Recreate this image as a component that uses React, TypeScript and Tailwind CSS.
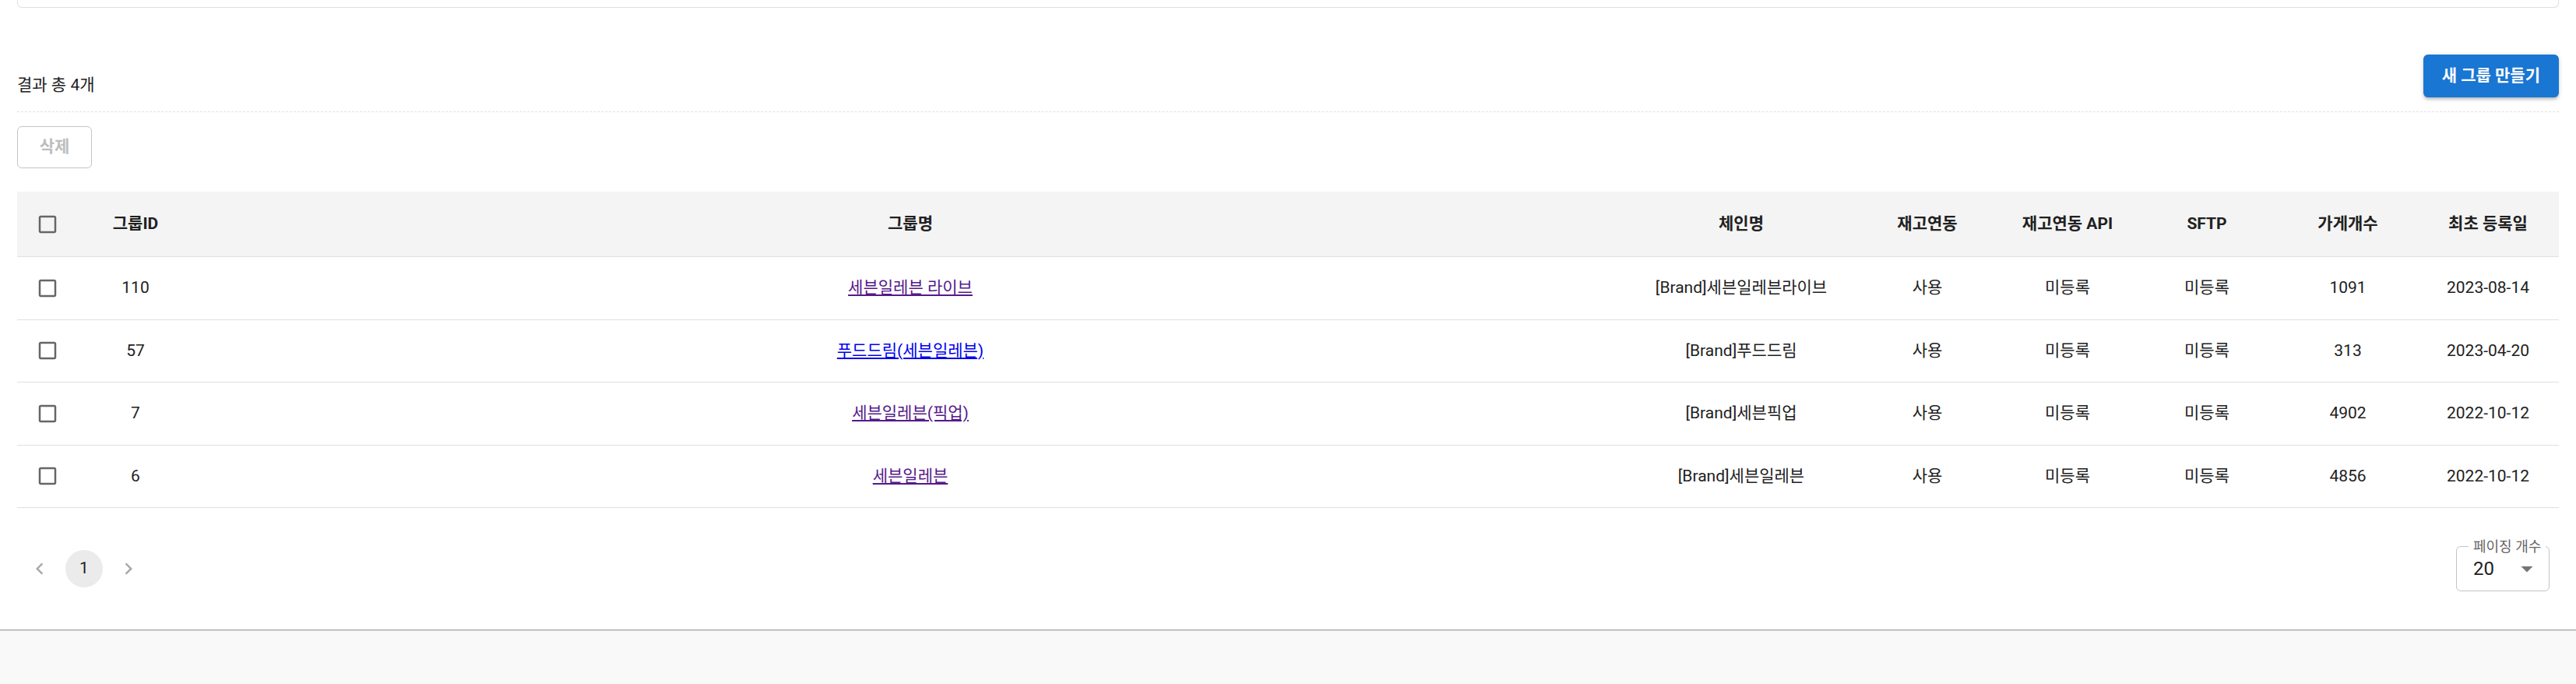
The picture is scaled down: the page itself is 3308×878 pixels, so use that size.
import React from 'react'

interface GroupRow {
  id: number
  name: string
  chain: string
  stock: string
  stockApi: string
  sftp: string
  stores: number
  createdAt: string
  visited: boolean
}

const rows: GroupRow[] = [
  { id: 110, name: '세븐일레븐 라이브', chain: '[Brand]세븐일레븐라이브', stock: '사용', stockApi: '미등록', sftp: '미등록', stores: 1091, createdAt: '2023-08-14', visited: true },
  { id: 57, name: '푸드드림(세븐일레븐)', chain: '[Brand]푸드드림', stock: '사용', stockApi: '미등록', sftp: '미등록', stores: 313, createdAt: '2023-04-20', visited: false },
  { id: 7, name: '세븐일레븐(픽업)', chain: '[Brand]세븐픽업', stock: '사용', stockApi: '미등록', sftp: '미등록', stores: 4902, createdAt: '2022-10-12', visited: true },
  { id: 6, name: '세븐일레븐', chain: '[Brand]세븐일레븐', stock: '사용', stockApi: '미등록', sftp: '미등록', stores: 4856, createdAt: '2022-10-12', visited: true },
]

const cols = 'grid grid-cols-[78px_148px_1fr_292px_186px_174px_184px_178px_182px] items-center text-center'

function Checkbox() {
  return (
    <svg viewBox="0 0 24 24" className="w-[30px] h-[30px] fill-[#666666]">
      <path d="M19 5v14H5V5h14m0-2H5c-1.11 0-2 .9-2 2v14c0 1.1.89 2 2 2h14c1.1 0 2-.9 2-2V5c0-1.1-.9-2-2-2z" />
    </svg>
  )
}

function Chevron({ dir }: { dir: 'left' | 'right' }) {
  return (
    <div className="w-[48px] h-[48px] flex items-center justify-center">
      <svg viewBox="0 0 24 24" className="w-[30px] h-[30px] fill-[#a9a9a9]">
        {dir === 'left'
          ? <path d="M15.41 7.41 14 6l-6 6 6 6 1.41-1.41L10.83 12z" />
          : <path d="M10 6 8.59 7.41 13.17 12l-4.58 4.59L10 18l6-6z" />}
      </svg>
    </div>
  )
}

export default function App() {
  return (
    <div className="min-h-screen bg-[#f9f9f9] text-[#212121] font-['Roboto','Noto_Sans_CJK_KR',sans-serif]">
      <div className="bg-white border-b border-[#aaaaaa] shadow-[0_1px_0_#d6d6d6]">
        <div className="px-[22px]">
          <div className="h-[10px] border border-t-0 border-[#e0e0e0] rounded-b-[6px]" />

          <div className="flex items-end justify-between pt-[60px] pb-[18px] border-b border-dashed border-[#e0e0e0]">
            <div className="text-[21px] leading-[31.5px]">결과 총 4개</div>
            <button className="h-[55px] px-[24px] rounded-[6px] bg-[#1976d2] text-white text-[21px] font-bold shadow-[0_3px_1.5px_-3px_rgba(0,0,0,0.2),0_3px_3px_0_rgba(0,0,0,0.14),0_1.5px_7.5px_0_rgba(0,0,0,0.12)]">
              새 그룹 만들기
            </button>
          </div>

          <div className="pt-[18px]">
            <button disabled className="w-[96px] h-[54px] rounded-[6px] border border-[#c4c4c4] text-[21px] font-bold text-[#bdbdbd]">
              삭제
            </button>
          </div>

          <div className="mt-[30px] text-[21px]">
            <div className={`${cols} h-[84px] bg-[#f4f4f4] border-b border-[#e0e0e0] font-bold`}>
              <div className="flex justify-center"><Checkbox /></div>
              <div>그룹ID</div>
              <div>그룹명</div>
              <div>체인명</div>
              <div>재고연동</div>
              <div>재고연동 API</div>
              <div>SFTP</div>
              <div>가게개수</div>
              <div>최초 등록일</div>
            </div>
            {rows.map(r => (
              <div key={r.id} className={`${cols} h-[80.5px] border-b border-[#e0e0e0]`}>
                <div className="flex justify-center"><Checkbox /></div>
                <div>{r.id}</div>
                <div>
                  <a href="#" className={r.visited ? 'underline text-[#551a8b]' : 'underline text-[#0000ee]'}>{r.name}</a>
                </div>
                <div>{r.chain}</div>
                <div>{r.stock}</div>
                <div>{r.stockApi}</div>
                <div>{r.sftp}</div>
                <div>{r.stores}</div>
                <div>{r.createdAt}</div>
              </div>
            ))}
          </div>

          <div className="flex items-center justify-between pt-[49px] pb-[49px]">
            <div className="flex items-center gap-[9px] pl-[5px]">
              <Chevron dir="left" />
              <div className="w-[48px] h-[48px] rounded-full bg-[#ebebeb] flex items-center justify-center text-[21px]">1</div>
              <Chevron dir="right" />
            </div>
            <div className="relative mr-[12px] w-[120px] h-[58px] border border-[#c4c4c4] rounded-[6px] flex items-center justify-between pl-[21px] pr-[10px]">
              <span className="absolute left-[15px] top-0 -translate-y-1/2 bg-white px-[6px] text-[18px] leading-none text-[#666666]">페이징 개수</span>
              <span className="text-[24px]">20</span>
              <svg viewBox="0 0 24 24" className="w-[36px] h-[36px] fill-[#757575]">
                <path d="M7 10l5 5 5-5z" />
              </svg>
            </div>
          </div>
        </div>
      </div>
    </div>
  )
}
